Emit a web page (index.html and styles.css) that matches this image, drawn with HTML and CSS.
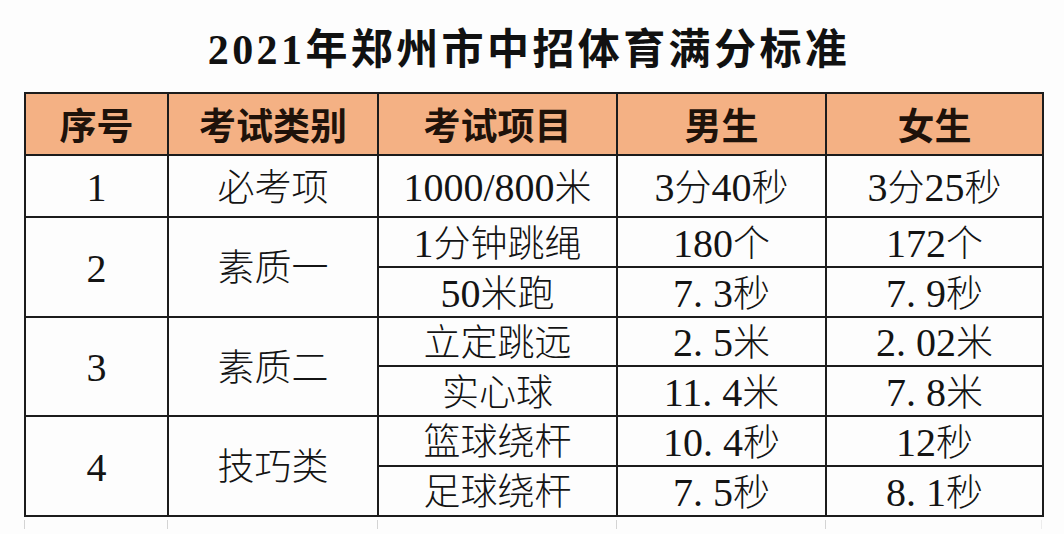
FILE: index.html
```html
<!DOCTYPE html>
<html lang="zh-CN">
<head>
<meta charset="utf-8">
<title>2021年郑州市中招体育满分标准</title>
<link rel="stylesheet" href="styles.css">
</head>
<body>
<div class="page">
  <h1 class="title">2021年郑州市中招体育满分标准</h1>
  <table class="score">
    <colgroup>
      <col class="c1"><col class="c2"><col class="c3"><col class="c4"><col class="c5">
    </colgroup>
    <thead>
      <tr class="head">
        <th>序号</th><th>考试类别</th><th>考试项目</th><th>男生</th><th>女生</th>
      </tr>
    </thead>
    <tbody>
      <tr class="tall">
        <td><span class="n">1</span></td><td>必考项</td><td><span class="n">1000/800</span>米</td><td><span class="n">3</span>分<span class="n">40</span>秒</td><td><span class="n">3</span>分<span class="n">25</span>秒</td>
      </tr>
      <tr class="sub">
        <td rowspan="2"><span class="n">2</span></td><td rowspan="2">素质一</td><td><span class="n">1</span>分钟跳绳</td><td><span class="n">180</span>个</td><td><span class="n">172</span>个</td>
      </tr>
      <tr class="sub">
        <td><span class="n">50</span>米跑</td><td><span class="n">7<span class="dot">.</span>3</span>秒</td><td><span class="n">7<span class="dot">.</span>9</span>秒</td>
      </tr>
      <tr class="sub">
        <td rowspan="2"><span class="n">3</span></td><td rowspan="2">素质二</td><td>立定跳远</td><td><span class="n">2<span class="dot">.</span>5</span>米</td><td><span class="n">2<span class="dot">.</span>02</span>米</td>
      </tr>
      <tr class="sub">
        <td>实心球</td><td><span class="n">11<span class="dot">.</span>4</span>米</td><td><span class="n">7<span class="dot">.</span>8</span>米</td>
      </tr>
      <tr class="sub">
        <td rowspan="2"><span class="n">4</span></td><td rowspan="2">技巧类</td><td>篮球绕杆</td><td><span class="n">10<span class="dot">.</span>4</span>秒</td><td><span class="n">12</span>秒</td>
      </tr>
      <tr class="sub">
        <td>足球绕杆</td><td><span class="n">7<span class="dot">.</span>5</span>秒</td><td><span class="n">8<span class="dot">.</span>1</span>秒</td>
      </tr>
    </tbody>
  </table>
  <div class="ticks">
    <span></span><span></span><span></span><span></span><span></span>
  </div>
</div>
</body>
</html>
```
FILE: styles.css
```css
html, body {
  margin: 0;
  padding: 0;
  background: #fdfdfd;
}

body {
  font-family: "Liberation Serif", "Noto Sans CJK SC", serif;
  color: #141414;
}

.page {
  width: 1064px;
  height: 534px;
  overflow: hidden;
  padding-left: 24px;
  box-sizing: border-box;
}

.title {
  margin: 0;
  padding-top: 22px;
  height: 70px;
  line-height: 56px;
  font-size: 42px;
  font-weight: 700;
  letter-spacing: 3.4px;
  text-align: center;
  color: #111;
  padding-right: 30px;
}

.score {
  border-collapse: collapse;
  table-layout: fixed;
  width: 1020px;
  font-size: 37px;
  font-weight: 300;
}

.c1 { width: 143px; }
.c2 { width: 210px; }
.c3 { width: 239px; }
.c4 { width: 209px; }
.c5 { width: 217px; }

.score th,
.score td {
  border: 2px solid #1c1c1c;
  padding: 4px 0 0 0;
  text-align: center;
  vertical-align: middle;
  line-height: 1;
  white-space: nowrap;
}

.head th {
  background: #f4b184;
  font-weight: 700;
  color: #1e120a;
  height: 62px;
  padding-top: 6px;
  box-sizing: border-box;
}

.tall td {
  height: 62px;
  box-sizing: border-box;
}

.sub td {
  height: 49.75px;
  box-sizing: border-box;
}

.n {
  font-size: 40px;
}

.dot {
  margin-right: 0.25em;
}

.ticks {
  display: grid;
  grid-template-columns: 143px 210px 239px 209px 217px;
  width: 1020px;
  height: 9px;
  margin-top: 3px;
}

.ticks span {
  border-left: 1px solid #d4d4d4;
}

.ticks span:last-child {
  border-right: 1px solid #ececec;
}
```
